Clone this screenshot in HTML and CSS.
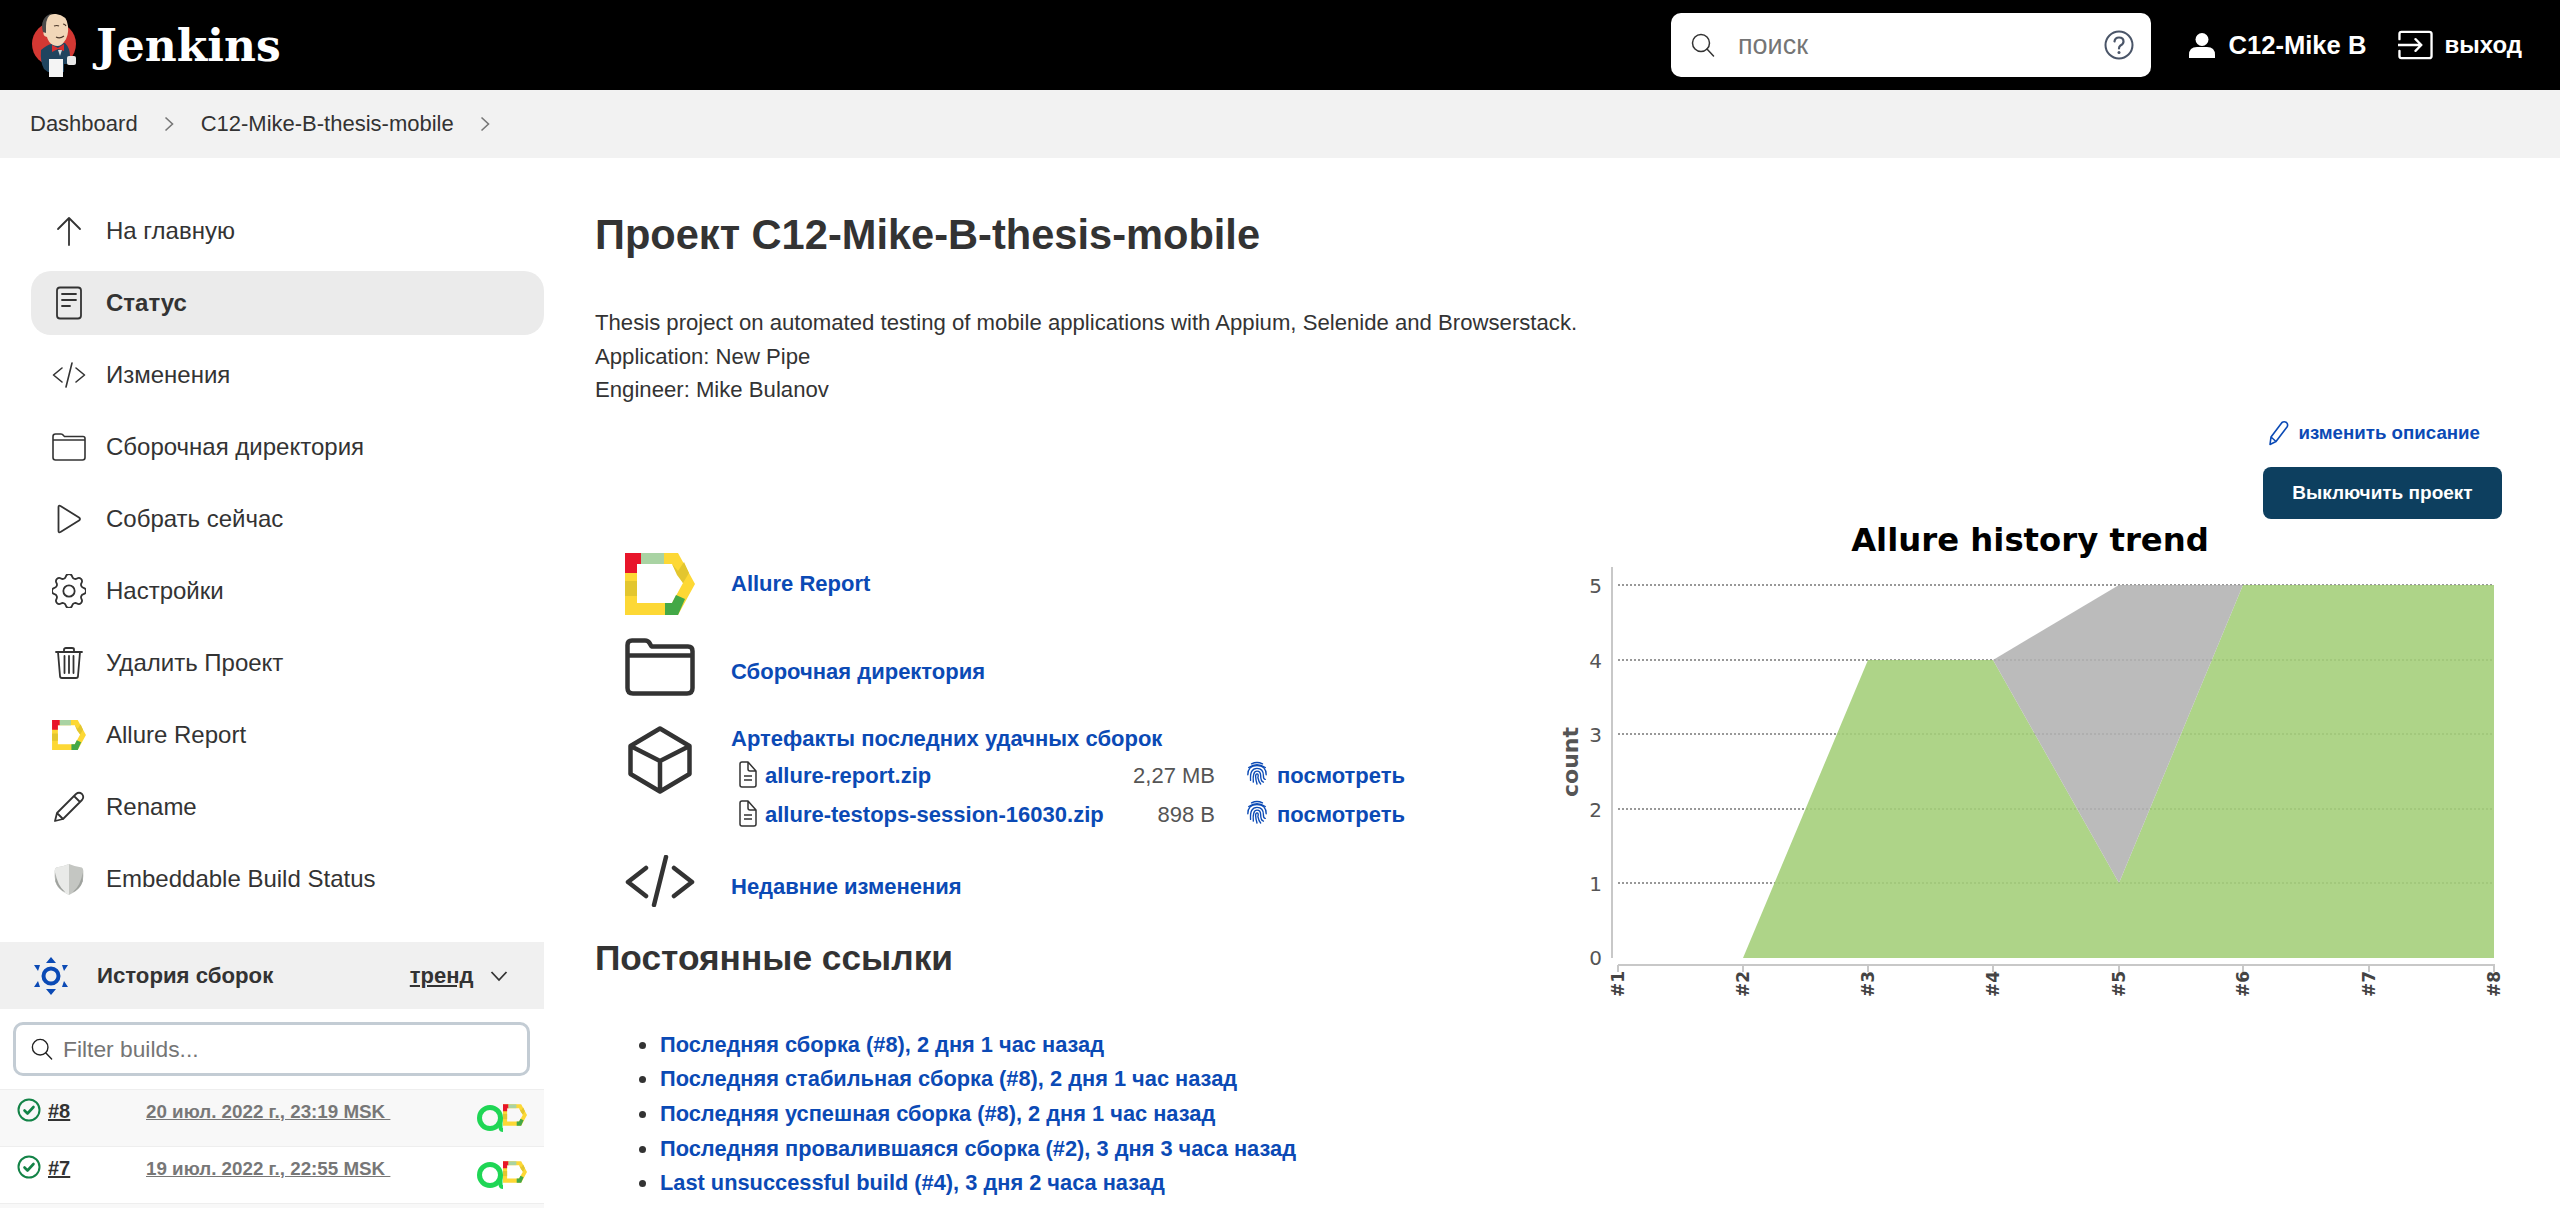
FILE: index.html

```html
<!DOCTYPE html>
<html lang="en">
<head>
    <meta charset="UTF-8">
    <title>C12-Mike-B-thesis-mobile [Jenkins]</title>
    <link rel="stylesheet" href="styles.css">
</head>
<body>

    <!-- shared icons -->
    <svg class="defs" width="0" height="0">
        <symbol id="allure" viewBox="0 0 70 62">
            <path fill="#fdd835" d="M0 0H53L70 31L53 62H0ZM12 11V50H47L58 30L47 11Z" fill-rule="evenodd"/>
            <path fill="#e8152a" d="M0 0H16V11H12V20H0Z"/>
            <path fill="#a9d3a3" d="M16 0H39V11H16Z"/>
            <path fill="#e3c62f" d="M0 28H12V43H0Z"/>
            <path fill="#e3c62f" d="M53 18L47 11L52 22L58 30L64 20L59 9Z"/>
            <path fill="#43a847" d="M40 50H47L51 42L60 46L53 62H40Z"/>
        </symbol>
        <symbol id="folder" viewBox="0 0 34 28">
            <path fill="none" stroke="currentColor" stroke-width="1.6" stroke-linejoin="round" d="M1 5V3.500Q1 1 3.500 1H9Q10.500 1 11.500 2.500L12.500 3.500H31Q33 3.500 33 5.500V24.500Q33 27 30.500 27H3.500Q1 27 1 24.500ZM1 7H33"/>
        </symbol>
        <symbol id="code" viewBox="0 0 34 26">
            <path fill="none" stroke="currentColor" stroke-width="1.6" stroke-linecap="round" stroke-linejoin="round" d="M10 6L1.500 13L10 20M24 6L32.500 13L24 20M20 1L14 25"/>
        </symbol>
        <symbol id="doc" viewBox="0 0 18 27">
            <path fill="none" stroke="currentColor" stroke-width="1.500" stroke-linejoin="round" d="M1 3Q1 1 3 1H9L17 10V24Q17 26 15 26H3Q1 26 1 24ZM9 1V8Q9 10 11 10H17M5 15H13M5 19H13"/>
        </symbol>
        <symbol id="print" viewBox="0 0 24 26">
            <g fill="none" stroke="#0b4ab5" stroke-width="1.500" stroke-linecap="round">
                <path d="M6 3Q12 0 18 3"/>
                <path d="M3 7Q12 1 21 7"/>
                <path d="M2 15Q2 5 12 5Q22 5 22 15"/>
                <path d="M5 21Q4 8 12 8Q19 8 19 16Q19 20 21 20"/>
                <path d="M8 23Q7 11 12 11Q16 11 16 16Q16 22 19 23"/>
                <path d="M12 25Q9 14 12 14Q14 14 13 18Q14 23 16 25"/>
            </g>
        </symbol>
        <symbol id="check" viewBox="0 0 24 24">
            <circle cx="12" cy="12" r="10.500" fill="none" stroke="#138347" stroke-width="2"/>
            <path fill="none" stroke="#138347" stroke-width="2.600" stroke-linecap="round" stroke-linejoin="round" d="M7.500 12.500L10.500 15.500L16.500 9"/>
        </symbol>
        <symbol id="loupe" viewBox="0 0 24 24">
            <circle cx="10" cy="10" r="8.500" fill="none" stroke="currentColor" stroke-width="1.500"/>
            <path fill="none" stroke="currentColor" stroke-width="1.500" stroke-linecap="round" d="M16 16L22.500 23"/>
        </symbol>
        <symbol id="aqua" viewBox="0 0 26 28">
            <circle cx="13" cy="14" r="10.500" fill="none" stroke="#1fd655" stroke-width="5"/>
            <path fill="none" stroke="#1fd655" stroke-width="4" stroke-linecap="round" d="M23.500 14V24Q24 26 26 26"/>
        </symbol>
    </svg>

    <header class="topbar">
        <a class="brand">
            <svg class="butler" viewBox="0 0 70 78">
                <circle cx="34" cy="38" r="22" fill="#d33833"/>
                <path fill="#20445f" d="M21 44Q27 39 31 38L45 37Q50 42 50 50L56 58L44 58V66H28L24 63Q20 56 21 44Z"/>
                <path fill="#f1d7b8" d="M24 20Q25 7 36 8Q47 9 48 20Q49 30 44 36Q40 42 33 39Q28 36 27 31Q22 30 24 24Z"/>
                <path fill="#4b4b4b" d="M23 26Q19 12 32 7Q26 11 26 20L26 27Z"/>
                <path fill="none" stroke="#4d3a2c" stroke-width="1.200" d="M34 20Q37 19 39 20M43 18Q45 18 46 20M36 31Q40 33 44 30"/>
                <path fill="#d92f2f" d="M32 39L38 42L44 38V45L38 43L32 46Z"/>
                <path fill="#cfd8dc" d="M38 44L42 44L40 50Z"/>
                <rect x="29" y="53" width="14" height="18" fill="#f4f4f4"/>
                <rect x="47" y="50" width="9" height="9" rx="2" fill="#e8e8e8"/>
            </svg>
            <span class="brand-name">Jenkins</span>
        </a>
        <div class="search-box">
            <svg class="search-icon"><use href="#loupe"/></svg>
            <input class="search-input" type="text" placeholder="поиск">
            <svg class="help-icon" viewBox="0 0 30 30">
                <circle cx="15" cy="15" r="13.500" fill="none" stroke="#4a5568" stroke-width="2"/>
                <path fill="none" stroke="#4a5568" stroke-width="2.200" stroke-linecap="round" d="M10.500 11.500Q11 7.500 15 7.500Q19.500 7.500 19.500 11.500Q19.500 14 16.500 15.500Q15 16.500 15 18.500"/>
                <circle cx="15" cy="22.500" r="1.500" fill="#4a5568"/>
            </svg>
        </div>
        <a class="user-link">
            <svg class="user-icon" viewBox="0 0 26 26">
                <circle cx="13" cy="7.500" r="6.500" fill="#fff"/>
                <path fill="#fff" d="M0 26V23Q0 15 8 15H18Q26 15 26 23V26Z"/>
            </svg>
            C12-Mike B
        </a>
        <a class="logout-link">
            <svg class="logout-icon" viewBox="0 0 36 30">
                <path fill="none" stroke="#fff" stroke-width="2.400" stroke-linecap="round" stroke-linejoin="round" d="M1.500 9V3.500Q1.500 1.500 3.500 1.500H32Q34.500 1.500 34.500 3.500V26.500Q34.500 28.500 32 28.500H3.500Q1.500 28.500 1.500 26.500V21M0 15H24M18 9L24 15L18 21"/>
            </svg>
            выход
        </a>
    </header>

    <nav class="breadcrumbs">
        <a>Dashboard</a>
        <svg class="crumb-sep" viewBox="0 0 10 16"><path d="M1.500 1.500L8.500 8L1.500 14.500"/></svg>
        <a>C12-Mike-B-thesis-mobile</a>
        <svg class="crumb-sep" viewBox="0 0 10 16"><path d="M1.500 1.500L8.500 8L1.500 14.500"/></svg>
    </nav>

    <div class="page">
        <aside class="sidebar">
            <div class="tasks">
                <a class="task">
                    <svg class="task-icon" viewBox="0 0 34 34"><path d="M17 31V4M6 15L17 4L28 15"/></svg>
                    На главную
                </a>
                <a class="task active">
                    <svg class="task-icon" viewBox="0 0 34 34"><path d="M8 1.500H26Q29 1.500 29 4.500V29.500Q29 32.500 26 32.500H8Q5 32.500 5 29.500V4.500Q5 1.500 8 1.500ZM10 8H24M10 14H24M10 20H18"/></svg>
                    Статус
                </a>
                <a class="task">
                    <svg class="task-icon"><use href="#code"/></svg>
                    Изменения
                </a>
                <a class="task">
                    <svg class="task-icon"><use href="#folder"/></svg>
                    Сборочная директория
                </a>
                <a class="task">
                    <svg class="task-icon" viewBox="0 0 34 34"><path d="M6.500 5Q6.500 3 8.500 4L27 15.500Q29 17 27 18.500L8.500 30Q6.500 31 6.500 29Z"/></svg>
                    Собрать сейчас
                </a>
                <a class="task">
                    <svg class="task-icon" viewBox="3 3 18 18"><path class="thin" d="M10.325 4.317c.426-1.756 2.924-1.756 3.35 0a1.724 1.724 0 002.573 1.066c1.543-.94 3.31.826 2.37 2.37a1.724 1.724 0 001.065 2.572c1.756.426 1.756 2.924 0 3.35a1.724 1.724 0 00-1.066 2.573c.94 1.543-.826 3.31-2.37 2.37a1.724 1.724 0 00-2.572 1.065c-.426 1.756-2.924 1.756-3.35 0a1.724 1.724 0 00-2.573-1.066c-1.543.94-3.31-.826-2.37-2.37a1.724 1.724 0 00-1.065-2.572c-1.756-.426-1.756-2.924 0-3.35a1.724 1.724 0 001.066-2.573c-.94-1.543.826-3.31 2.37-2.37.996.608 2.296.07 2.572-1.065z"/><circle class="thin" cx="12" cy="12" r="3"/></svg>
                    Настройки
                </a>
                <a class="task">
                    <svg class="task-icon" viewBox="0 0 34 34"><path d="M4 6H30M12 6V3.500Q12 2 14 2H20Q22 2 22 3.500V6M6 6L8 30Q8 32 10 32H24Q26 32 26 30L28 6M12.500 10V27M17 10V27M21.500 10V27"/></svg>
                    Удалить Проект
                </a>
                <a class="task">
                    <svg class="allure-small"><use href="#allure"/></svg>
                    Allure Report
                </a>
                <a class="task">
                    <svg class="task-icon" viewBox="0 0 34 34"><path d="M3 31L5 23L24 4Q27 1.500 30 4Q32.500 7 30 10L11 29ZM5 23L11 29M22 6L28 12"/></svg>
                    Rename
                </a>
                <a class="task">
                    <svg class="shield" viewBox="0 0 34 36">
                        <path fill="#c4c6c2" d="M17 1Q24 4 31 5Q34 6 32 20Q29 30 17 35Q5 30 2 20Q0 6 3 5Q10 4 17 1Z"/>
                        <path fill="#e9eae8" d="M17 1V35Q5 30 2 20Q0 6 3 5Q10 4 17 1Z"/>
                        <path fill="#9fa29e" d="M2 10Q4 24 13 32Q5 29 2 20ZM32 10Q30 24 21 32Q29 29 32 20Z"/>
                    </svg>
                    Embeddable Build Status
                </a>
            </div>

            <section class="history">
                <div class="history-head">
                    <svg class="history-icon" viewBox="0 0 34 40">
                        <circle cx="17" cy="20" r="7.500" fill="none" stroke="#0b4ab5" stroke-width="4"/>
                        <path fill="#0b4ab5" d="M17 1L22 7H12ZM17 39L12 33H22ZM0 9H6L4 15ZM34 9H28L30 15ZM0 31L4 25L6 31ZM34 31L30 25L28 31Z"/>
                    </svg>
                    <span class="history-title">История сборок</span>
                    <a class="trend">тренд</a>
                    <svg class="trend-arrow" viewBox="0 0 18 12"><path d="M1.500 2L9 10L16.500 2"/></svg>
                </div>
                <div class="filter">
                    <svg class="filter-icon"><use href="#loupe"/></svg>
                    <input class="filter-input" type="text" placeholder="Filter builds...">
                </div>
                <div class="builds">
                    <div class="build shaded">
                        <svg class="build-status"><use href="#check"/></svg>
                        <a class="build-num">#8</a>
                        <a class="build-date">20 июл. 2022 г., 23:19 MSK&nbsp;</a>
                        <svg class="build-aqua"><use href="#aqua"/></svg>
                        <svg class="build-allure"><use href="#allure"/></svg>
                    </div>
                    <div class="build">
                        <svg class="build-status"><use href="#check"/></svg>
                        <a class="build-num">#7</a>
                        <a class="build-date">19 июл. 2022 г., 22:55 MSK&nbsp;</a>
                        <svg class="build-aqua"><use href="#aqua"/></svg>
                        <svg class="build-allure"><use href="#allure"/></svg>
                    </div>
                    <div class="build shaded"></div>
                </div>
            </section>
        </aside>

        <main class="content">
            <h1 class="job-title">Проект C12-Mike-B-thesis-mobile</h1>
            <div class="description">
                Thesis project on automated testing of mobile applications with Appium, Selenide and Browserstack.<br>
                Application: New Pipe<br>
                Engineer: Mike Bulanov
            </div>
            <div class="edit-row">
                <a class="edit-link">
                    <svg class="edit-icon" viewBox="0 0 22 26"><path d="M2 24.500L3 17L14 2.500Q16 1 18.500 2.500Q20.500 4.500 19 7L8 21.500ZM3 17L8 21.500"/></svg>
                    изменить описание
                </a>
            </div>
            <div class="disable-row">
                <button class="disable-btn">Выключить проект</button>
            </div>

            <div class="columns">
                <div class="links">
                    <a class="link-row allure-row">
                        <svg class="link-icon big-allure"><use href="#allure"/></svg>
                        <span>Allure Report</span>
                    </a>
                    <a class="link-row folder-row">
                        <svg class="link-icon big-folder" viewBox="0 0 70 58">
                            <path fill="none" stroke="#333" stroke-width="4.500" stroke-linejoin="round" d="M2.500 10V7Q2.500 2.500 7 2.500H20Q23 2.500 24.500 5L26.500 8.500H63Q67.500 8.500 67.500 13V50Q67.500 55.500 62 55.500H8Q2.500 55.500 2.500 50ZM2.500 17.500H67.500"/>
                        </svg>
                        <span>Сборочная директория</span>
                    </a>
                    <div class="artifacts-row">
                        <svg class="link-icon cube" viewBox="0 0 64 68">
                            <path fill="none" stroke="#333" stroke-width="4.500" stroke-linejoin="round" d="M32 2.500L61.500 20V48L32 65.500L2.500 48V20ZM2.500 20L32 35L61.500 20M32 35V65.500"/>
                        </svg>
                        <div class="artifacts">
                            <a class="artifacts-title">Артефакты последних удачных сборок</a>
                            <div class="artifact">
                                <svg class="doc-icon"><use href="#doc"/></svg>
                                <a class="artifact-name">allure-report.zip</a>
                                <span class="artifact-size">2,27 MB</span>
                                <svg class="print-icon"><use href="#print"/></svg>
                                <a class="artifact-view">посмотреть</a>
                            </div>
                            <div class="artifact">
                                <svg class="doc-icon"><use href="#doc"/></svg>
                                <a class="artifact-name">allure-testops-session-16030.zip</a>
                                <span class="artifact-size">898 B</span>
                                <svg class="print-icon"><use href="#print"/></svg>
                                <a class="artifact-view">посмотреть</a>
                            </div>
                        </div>
                    </div>
                    <a class="link-row changes-row">
                        <svg class="link-icon big-code" viewBox="0 0 70 52">
                            <path fill="none" stroke="#333" stroke-width="4.500" stroke-linecap="round" stroke-linejoin="round" d="M21 13L3 27L21 41M49 13L67 27L49 41M41 2L29 50"/>
                        </svg>
                        <span>Недавние изменения</span>
                    </a>

                    <h2 class="permalinks-title">Постоянные ссылки</h2>
                    <ul class="permalinks">
                        <li><a>Последняя сборка (#8), 2 дня 1 час назад</a></li>
                        <li><a>Последняя стабильная сборка (#8), 2 дня 1 час назад</a></li>
                        <li><a>Последняя успешная сборка (#8), 2 дня 1 час назад</a></li>
                        <li><a>Последняя провалившаяся сборка (#2), 3 дня 3 часа назад</a></li>
                        <li><a>Last unsuccessful build (#4), 3 дня 2 часа назад</a></li>
                        <li><a>Last completed build (#8), 2 дня 1 час назад</a></li>
                    </ul>
                </div>

                <!-- trend chart, grid sits under the slightly see-through areas -->
                <svg class="chart" viewBox="0 0 960 490">
                    <text class="chart-title" x="480" y="31" text-anchor="middle">Allure history trend</text>
                    <path class="chart-grid" d="M68 65H944M68 140H944M68 214H944M68 289H944M68 363H944"/>
                    <path class="area-pass" d="M193 438L318 140H443L569 363L693 65H944V438Z"/>
                    <path class="area-skip" d="M443 140L569 65H693L569 363Z"/>
                    <path class="chart-axis" d="M62 47V438M68 445H945M68 445V452M193 445V452M318 445V452M443 445V452M569 445V452M693 445V452M819 445V452M944 445V452"/>
                    <text class="chart-tick" x="52" y="73" text-anchor="end">5</text>
                    <text class="chart-tick" x="52" y="148" text-anchor="end">4</text>
                    <text class="chart-tick" x="52" y="222" text-anchor="end">3</text>
                    <text class="chart-tick" x="52" y="297" text-anchor="end">2</text>
                    <text class="chart-tick" x="52" y="371" text-anchor="end">1</text>
                    <text class="chart-tick" x="52" y="445" text-anchor="end">0</text>
                    <text class="chart-label" transform="translate(28 242) rotate(-90)" text-anchor="middle">count</text>
                    <text class="chart-build" transform="translate(74 477) rotate(-90)">#1</text>
                    <text class="chart-build" transform="translate(199 477) rotate(-90)">#2</text>
                    <text class="chart-build" transform="translate(324 477) rotate(-90)">#3</text>
                    <text class="chart-build" transform="translate(449 477) rotate(-90)">#4</text>
                    <text class="chart-build" transform="translate(575 477) rotate(-90)">#5</text>
                    <text class="chart-build" transform="translate(699 477) rotate(-90)">#6</text>
                    <text class="chart-build" transform="translate(825 477) rotate(-90)">#7</text>
                    <text class="chart-build" transform="translate(950 477) rotate(-90)">#8</text>
                </svg>
            </div>
        </main>
    </div>

</body>
</html>
```

FILE: styles.css

```css
* {
    margin: 0;
    padding: 0;
    box-sizing: border-box;
}

html,
body {
    height: 1208px;
    overflow: hidden;
}

body {
    font-family: "Liberation Sans", Arial, sans-serif;
    font-size: 24px;
    color: #333;
    background-color: #fff;
}

.defs {
    position: absolute;
}

/* Top bar */
.topbar {
    display: flex;
    align-items: center;
    height: 90px;
    padding: 0 38px 0 20px;
    background-color: #000;
    color: #fff;
}

.brand {
    display: flex;
    align-items: center;
    margin-right: auto;
}

.butler {
    width: 70px;
    height: 78px;
}

.brand-name {
    margin-left: 6px;
    font-family: "DejaVu Serif", Georgia, serif;
    font-size: 44px;
    font-weight: bold;
}

.search-box {
    display: flex;
    align-items: center;
    width: 480px;
    height: 64px;
    padding: 0 17px 0 20px;
    background-color: #fff;
    border-radius: 10px;
    color: #333;
}

.search-icon {
    flex: none;
    width: 24px;
    height: 24px;
}

.search-input {
    flex: 1;
    min-width: 0;
    margin-left: 23px;
    border: none;
    outline: none;
    font-family: "Liberation Sans", Arial, sans-serif;
    font-size: 27px;
}

.search-input::placeholder,
.filter-input::placeholder {
    color: #757575;
    opacity: 1;
}

.help-icon {
    flex: none;
    width: 30px;
    height: 30px;
}

.user-link,
.logout-link {
    display: flex;
    align-items: center;
    font-weight: bold;
}

.user-link {
    margin-left: 38.5px;
    font-size: 25.6px;
}

.user-icon {
    width: 26px;
    height: 26px;
    margin-right: 13px;
}

.logout-link {
    margin-left: 32px;
    font-size: 24px;
}

.logout-icon {
    width: 35px;
    height: 30px;
    margin-right: 11px;
}

/* Breadcrumbs */
.breadcrumbs {
    display: flex;
    align-items: center;
    height: 68px;
    padding-left: 30px;
    background-color: #f2f2f2;
    font-size: 22px;
}

.crumb-sep {
    width: 10px;
    height: 16px;
    margin: 0 27px 0 26px;
    fill: none;
    stroke: #777;
    stroke-width: 1.600;
}

/* Page layout */
.page {
    display: flex;
}

.sidebar {
    flex: none;
    width: 544px;
    padding-top: 41px;
}

.tasks {
    display: flex;
    flex-direction: column;
    gap: 8px;
    padding-left: 31px;
}

.task {
    display: flex;
    align-items: center;
    height: 64px;
    padding-left: 21px;
    border-radius: 20px;
}

.task.active {
    background-color: #ebebeb;
    font-weight: bold;
}

.task-icon {
    flex: none;
    width: 34px;
    height: 34px;
    margin-right: 20px;
    fill: none;
    stroke: #333;
    stroke-width: 1.800;
    stroke-linecap: round;
    stroke-linejoin: round;
}

.task-icon .thin {
    stroke-width: 0.950;
}

.allure-small {
    flex: none;
    width: 34px;
    height: 30px;
    margin-right: 20px;
}

.shield {
    flex: none;
    width: 34px;
    height: 33px;
    margin-right: 20px;
}

/* Build history */
.history {
    margin-top: 31px;
}

.history-head {
    display: flex;
    align-items: center;
    height: 67px;
    padding: 0 36.5px 0 34px;
    background-color: #f0f0f0;
}

.history-icon {
    width: 34px;
    height: 40px;
    margin-right: 29px;
}

.history-title {
    margin-right: auto;
    font-size: 22.2px;
    font-weight: bold;
}

.trend {
    font-size: 22px;
    font-weight: bold;
    text-decoration: underline;
}

.trend-arrow {
    width: 18px;
    height: 12px;
    margin-left: 16px;
    fill: none;
    stroke: #333;
    stroke-width: 1.800;
}

.filter {
    display: flex;
    align-items: center;
    height: 54px;
    margin: 13px 14px 0 13px;
    padding-left: 15px;
    border: 3px solid #c3ccd4;
    border-radius: 10px;
}

.filter-icon {
    flex: none;
    width: 22px;
    height: 24px;
    color: #222;
}

.filter-input {
    flex: 1;
    min-width: 0;
    margin-left: 10px;
    border: none;
    outline: none;
    font-family: "Liberation Sans", Arial, sans-serif;
    font-size: 22.8px;
}

.builds {
    margin-top: 13px;
}

.build {
    display: flex;
    align-items: flex-start;
    height: 57px;
    padding: 8px 17px 0;
    border-top: 1px solid #eee;
    font-size: 20px;
    font-weight: bold;
}

.build.shaded {
    background-color: #f8f8f8;
}

.build-status {
    flex: none;
    width: 24px;
    height: 24px;
}

.build-num {
    width: 98px;
    margin: 2px 0 0 7px;
    text-decoration: underline;
}

.build-date {
    margin-top: 3px;
    color: #777;
    font-size: 18.8px;
    text-decoration: underline;
}

.build-aqua {
    flex: none;
    width: 26px;
    height: 28px;
    margin: 6px 0 0 auto;
}

.build-allure {
    flex: none;
    width: 24px;
    height: 24px;
    margin-top: 5px;
}

/* Main column */
.content {
    flex: 1;
    min-width: 0;
    padding: 53px 58px 0 51px;
}

.job-title {
    font-size: 41.6px;
    line-height: 48px;
}

.description {
    margin-top: 47px;
    font-size: 22.15px;
    line-height: 33.5px;
}

.edit-row {
    display: flex;
    justify-content: flex-end;
    height: 30px;
    margin-top: 11.5px;
    padding-right: 22px;
}

.edit-link {
    display: flex;
    align-items: center;
    color: #0b4ab5;
    font-size: 18.7px;
    font-weight: bold;
}

.edit-icon {
    width: 22px;
    height: 26px;
    margin-right: 8px;
    fill: none;
    stroke: #0b4ab5;
    stroke-width: 1.600;
    stroke-linejoin: round;
}

.disable-row {
    display: flex;
    justify-content: flex-end;
    margin-top: 19px;
}

.disable-btn {
    width: 239px;
    height: 52px;
    border: none;
    border-radius: 8px;
    background-color: #0d3f5f;
    color: #fff;
    font-family: "Liberation Sans", Arial, sans-serif;
    font-size: 19px;
    font-weight: bold;
}

.columns {
    display: flex;
    justify-content: space-between;
    margin-top: 1px;
}

.links {
    padding-top: 33px;
}

.links a {
    color: #0b4ab5;
    font-weight: bold;
    font-size: 22px;
}

.link-row {
    display: flex;
    align-items: center;
    padding-left: 30px;
}

.link-row svg {
    align-self: flex-start;
}

.link-icon {
    flex: none;
    width: 70px;
    margin-right: 36px;
}

.allure-row {
    height: 62px;
}

.big-allure {
    height: 62px;
}

.folder-row {
    height: 72px;
    margin-top: 21px;
}

.big-folder {
    height: 58px;
    margin-top: 2px;
}

.artifacts-row {
    display: flex;
    margin-top: 18px;
    padding-left: 30px;
}

.cube {
    height: 68px;
}

.artifacts-title {
    display: block;
    line-height: 26px;
}

.artifact {
    display: flex;
    align-items: center;
    height: 39.2px;
    padding-left: 8px;
}

.artifact:first-of-type {
    margin-top: 4.5px;
}

.doc-icon {
    flex: none;
    width: 18px;
    height: 27px;
    margin: -4px 8px 0 0;
    color: #333;
}

.artifact-name {
    width: 364px;
}

.artifact-size {
    width: 86px;
    color: #555;
    text-align: right;
    font-size: 22px;
}

.print-icon {
    flex: none;
    width: 22px;
    height: 26px;
    margin: -6px 9px 0 31px;
}

.changes-row {
    height: 64px;
    margin-top: 20px;
}

.big-code {
    height: 52px;
}

.permalinks-title {
    margin-top: 18px;
    font-size: 35.3px;
    line-height: 41px;
}

.permalinks {
    margin-top: 49px;
    padding-left: 65px;
}

.permalinks li {
    height: 34.6px;
    line-height: 34.6px;
}

.permalinks a {
    font-size: 21.8px;
}

/* Chart */
.chart {
    flex: none;
    width: 960px;
    height: 490px;
    margin-right: -8px;
}

.chart text {
    font-family: "DejaVu Sans", sans-serif;
}

.chart-title {
    font-size: 32.3px;
    font-weight: bold;
    fill: #000;
}

.chart-grid {
    fill: none;
    stroke: #777;
    stroke-width: 1.4;
    stroke-dasharray: 2 2;
}

.area-pass {
    fill: #a3ce78;
    fill-opacity: 0.88;
}

.area-skip {
    fill: #b2b2b2;
    fill-opacity: 0.88;
}

.chart-axis {
    fill: none;
    stroke: #c8c8c8;
    stroke-width: 2;
}

.chart-tick {
    font-size: 20px;
    fill: #555;
}

.chart-label {
    font-size: 22px;
    font-weight: bold;
    fill: #555;
}

.chart-build {
    font-size: 17px;
    font-weight: bold;
    fill: #444;
}
```
